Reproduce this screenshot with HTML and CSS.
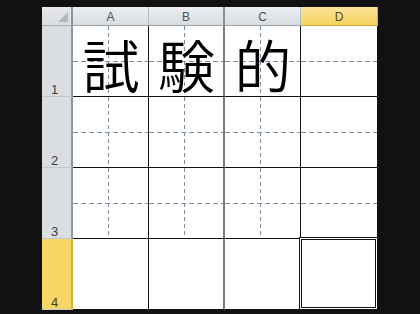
FILE: index.html
```html
<!DOCTYPE html>
<html lang="ja">
<head>
<meta charset="utf-8">
<title>Sheet</title>
<link rel="stylesheet" href="styles.css">
</head>
<body>
<div class="sheet">
  <div class="corner"><span class="tri"></span></div>
  <div class="colhead">A</div>
  <div class="colhead colhead-b">B</div>
  <div class="colhead">C</div>
  <div class="colhead colhead-sel">D</div>

  <div class="rowhead">1</div>
  <div class="cell guide col-a"><span class="kanji">試</span></div>
  <div class="cell guide col-b"><span class="kanji">験</span></div>
  <div class="cell guide col-c"><span class="kanji">的</span></div>
  <div class="cell hguide col-d"></div>

  <div class="rowhead">2</div>
  <div class="cell guide col-a"></div>
  <div class="cell guide col-b"></div>
  <div class="cell guide col-c"></div>
  <div class="cell hguide col-d"></div>

  <div class="rowhead">3</div>
  <div class="cell guide col-a"></div>
  <div class="cell guide col-b"></div>
  <div class="cell guide col-c"></div>
  <div class="cell hguide col-d"></div>

  <div class="rowhead rowhead-sel">4</div>
  <div class="cell col-a"></div>
  <div class="cell col-b"></div>
  <div class="cell col-c"></div>
  <div class="cell col-d selected"></div>
</div>
</body>
</html>
```
FILE: styles.css
```css
html, body {
  margin: 0;
  padding: 0;
  background: #111111;
  width: 420px;
  height: 314px;
  overflow: hidden;
}

.sheet {
  margin: 7px 0 0 42px;
  width: 336px;
  display: grid;
  grid-template-columns: 31px 76px 76px 76px 77px;
  grid-template-rows: 19px 71px 71px 71px 71px;
  background: #ffffff;
  font-family: "Liberation Sans", Arial, sans-serif;
}

.sheet > div {
  box-sizing: border-box;
}

.corner {
  background: linear-gradient(#e6e8eb, #dadde1);
  border-right: 2px solid #8f959c;
  border-bottom: 1px solid #a9aeb4;
  display: flex;
  justify-content: flex-end;
  align-items: flex-end;
}

.tri {
  width: 0;
  height: 0;
  border-left: 10px solid transparent;
  border-bottom: 10px solid #b3b7bc;
  margin: 0 3px 3px 0;
}

.colhead {
  background: linear-gradient(#eceef1, #d8dce1);
  border-right: 1px solid #b6bcc3;
  border-bottom: 1px solid #9ba2aa;
  color: #4a4f55;
  font-size: 12px;
  line-height: 16px;
  padding-top: 2px;
  text-align: center;
}

.colhead-b {
  border-right: 2px solid #8a9098;
}

.colhead-sel {
  background: linear-gradient(#fbe49a, #f6d35e);
  border-bottom: 1px solid #d9ae3c;
  border-right: 1px solid #d9ae3c;
  color: #5a4a1e;
}

.rowhead {
  background: #dadde1;
  border-right: 2px solid #8f959c;
  border-bottom: 1px solid #c3c7cc;
  color: #3c4147;
  font-size: 13px;
  line-height: 13px;
  padding-left: 9px;
  display: flex;
  align-items: flex-end;
}

.rowhead-sel {
  background: #f8d665;
  border-right: 2px solid #d8ad3a;
  color: #4a3d15;
}

.cell {
  border-right: 1px solid #111111;
  border-bottom: 1px solid #111111;
  display: flex;
  justify-content: center;
  align-items: flex-end;
  padding-bottom: 4px;
}

.col-b {
  border-right: 2px solid #7a7d80;
}

.col-d {
  border-right: 1px solid #111111;
}

.guide {
  background-image:
    repeating-linear-gradient(to bottom, #7a8ca2 0 4px, transparent 4px 7px),
    repeating-linear-gradient(to right, #7a8ca2 0 5px, transparent 5px 8px);
  background-size: 1px 100%, 100% 1px;
  background-position: 35px 0, 0 35px;
  background-repeat: no-repeat;
}

.hguide {
  background-image: repeating-linear-gradient(to right, #7a8ca2 0 5px, transparent 5px 8px);
  background-size: 100% 1px;
  background-position: 0 35px;
  background-repeat: no-repeat;
}

.selected {
  background: #ffffff;
  border: 3px double #111111;
  margin: -2px 0 0 -2px;
}

.kanji {
  font-family: "Noto Sans CJK JP", "Noto Sans CJK SC", sans-serif;
  font-weight: 350;
  font-size: 57px;
  line-height: 57px;
  color: #000000;
  padding-left: 1px;
}
```
